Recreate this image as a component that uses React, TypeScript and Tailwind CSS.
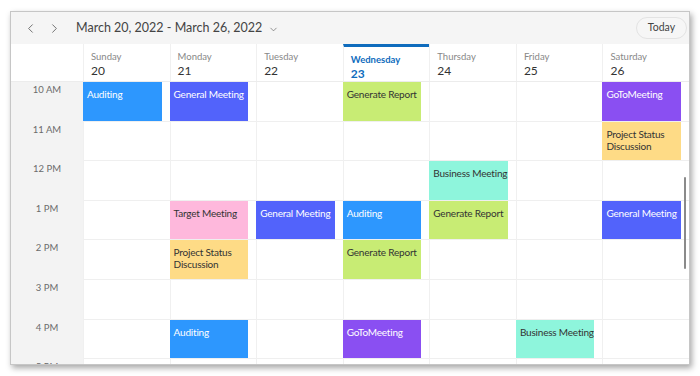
import React from 'react';
import { ChevronLeft, ChevronRight, ChevronDown } from 'lucide-react';

type Ev = { day: number; hour: number; title: string; kind: string };

const kinds: Record<string, string> = {
  auditing: 'bg-[#2d97fe] text-white',
  general: 'bg-[#5263fb] text-white',
  report: 'bg-[#c8ec74] text-[#333]',
  business: 'bg-[#8ef5dc] text-[#333]',
  target: 'bg-[#feb8dc] text-[#333]',
  project: 'bg-[#fedb86] text-[#333]',
  goto: 'bg-[#8a4ff2] text-white',
};

const days = [
  { name: 'Sunday', date: 20 },
  { name: 'Monday', date: 21 },
  { name: 'Tuesday', date: 22 },
  { name: 'Wednesday', date: 23, today: true },
  { name: 'Thursday', date: 24 },
  { name: 'Friday', date: 25 },
  { name: 'Saturday', date: 26 },
];

const hours = ['10 AM', '11 AM', '12 PM', '1 PM', '2 PM', '3 PM', '4 PM', '5 PM'];

const events: Ev[] = [
  { day: 0, hour: 0, title: 'Auditing', kind: 'auditing' },
  { day: 1, hour: 0, title: 'General Meeting', kind: 'general' },
  { day: 1, hour: 3, title: 'Target Meeting', kind: 'target' },
  { day: 1, hour: 4, title: 'Project Status\nDiscussion', kind: 'project' },
  { day: 1, hour: 6, title: 'Auditing', kind: 'auditing' },
  { day: 2, hour: 3, title: 'General Meeting', kind: 'general' },
  { day: 3, hour: 0, title: 'Generate Report', kind: 'report' },
  { day: 3, hour: 3, title: 'Auditing', kind: 'auditing' },
  { day: 3, hour: 4, title: 'Generate Report', kind: 'report' },
  { day: 3, hour: 6, title: 'GoToMeeting', kind: 'goto' },
  { day: 4, hour: 2, title: 'Business Meeting', kind: 'business' },
  { day: 4, hour: 3, title: 'Generate Report', kind: 'report' },
  { day: 5, hour: 6, title: 'Business Meeting', kind: 'business' },
  { day: 6, hour: 0, title: 'GoToMeeting', kind: 'goto' },
  { day: 6, hour: 1, title: 'Project Status\nDiscussion', kind: 'project' },
  { day: 6, hour: 3, title: 'General Meeting', kind: 'general' },
];

const App = () => {
  return <div className="min-h-screen bg-white pt-[11px] pl-[10px] font-['Lato',sans-serif]">
      <div className="relative w-[680px] h-[354px] border border-[#c6c6c6] shadow-[2px_3px_6px_rgba(0,0,0,0.35)] bg-white flex flex-col overflow-hidden">
        {/* toolbar */}
        <div className="h-[32px] shrink-0 bg-[#f5f5f5] flex items-center pl-[12px] pr-[2px]">
          <ChevronLeft size={15} strokeWidth={1.3} className="text-[#555]" />
          <ChevronRight size={15} strokeWidth={1.3} className="text-[#555] ml-[9px]" />
          <span className="ml-[14px] text-[12.5px] text-[#444]">March 20, 2022 - March 26, 2022</span>
          <ChevronDown size={11} strokeWidth={1.5} className="text-[#666] ml-[6px] mt-[2px]" />
          <button className="ml-auto h-[22px] w-[51px] rounded-full border border-[#e3e3e3] bg-[#f6f6f6] text-[10.5px] text-[#444]">
            Today
          </button>
        </div>
        {/* day header */}
        <div className="h-[38px] shrink-0 flex border-b border-[#ececec]">
          <div className="w-[72px] shrink-0" />
          {days.map(d => <div key={d.name} className={`flex-1 border-l border-[#f0f0f0] pl-[7px] pt-[6px] ${d.today ? 'border-t-[3px] border-t-[#0f6cbd] pt-[3px]' : ''}`}>
              <div className={`text-[9.5px] leading-[13px] ${d.today ? 'text-[#0f6cbd] font-bold' : 'text-[#888]'}`}>{d.name}</div>
              <div className={`text-[12px] leading-[16px] ${d.today ? 'text-[#0f6cbd] font-bold' : 'text-[#333]'}`}>{d.date}</div>
            </div>)}
        </div>
        {/* body */}
        <div className="flex-1 flex overflow-hidden">
          <div className="w-[72px] shrink-0 bg-[#f3f3f3]">
            {hours.map(h => <div key={h} className="h-[39.6px] text-center text-[9.5px] leading-[14px] text-[#6b6b6b] pt-[1px]">{h}</div>)}
          </div>
          {days.map((d, di) => <div key={d.name} className="flex-1 border-l border-[#f0f0f0]">
              {hours.map((h, hi) => {
            const ev = events.find(e => e.day === di && e.hour === hi);
            return <div key={h} className="h-[39.6px] border-b border-[#efefef] pr-[8px]">
                    {ev && <div className={`h-full -ml-px pl-[4px] pt-[6px] text-[10px] leading-[12px] tracking-[-0.2px] whitespace-pre overflow-hidden ${kinds[ev.kind]}`}>
                        {ev.title}
                      </div>}
                  </div>;
          })}
            </div>)}
        </div>
        {/* scrollbar */}
        <div className="absolute right-[3px] top-[165px] w-[2px] h-[92px] rounded-full bg-[#8a8a8a]" />
      </div>
    </div>;
};

export default App;
